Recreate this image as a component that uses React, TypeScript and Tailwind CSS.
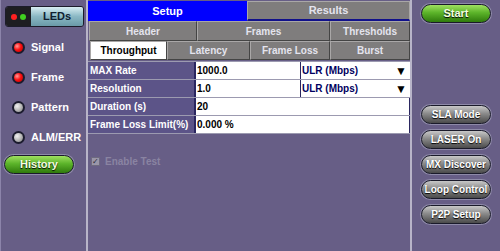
import React from 'react'

const font = { fontFamily: '"Liberation Sans", Arial, sans-serif' }

function Led({ on, label }: { on: boolean; label: string }) {
  return (
    <div className="flex items-center h-[30px] pl-[11px]">
      <div className="w-[13px] h-[13px] rounded-full bg-[#1b1b2e] flex items-center justify-center">
        <div
          className={`w-[9px] h-[9px] rounded-full ${
            on
              ? 'bg-[radial-gradient(circle_at_35%_35%,#ff9a9a,#ff1010_45%,#b00000)]'
              : 'bg-[radial-gradient(circle_at_35%_35%,#f2f2f2,#b8b8b8_50%,#7a7a7a)]'
          }`}
        />
      </div>
      <span className="ml-[6px] text-[11px] font-bold text-white">{label}</span>
    </div>
  )
}

function Pill({ label, green }: { label: string; green?: boolean }) {
  return (
    <div className="rounded-full p-[1px] bg-[#8e8aa8] w-[72px]">
      <div
        className={`h-[19px] rounded-full border border-[#1a1a2a] flex items-center justify-center whitespace-nowrap font-bold [text-shadow:0_1px_1px_#000] ${
          green
            ? 'text-[11px] bg-[linear-gradient(#9fe060,#5cb42a_45%,#2f7a0c)] text-[#f4ffe0]'
            : 'text-[10px] bg-[linear-gradient(#c8c8c8,#8a8a8a_45%,#4a4a4a)] text-white'
        }`}
      >
        {label}
      </div>
    </div>
  )
}

function Tab({ label, w, active }: { label: string; w: string; active?: boolean }) {
  return (
    <div
      className={`${w} h-full flex items-center justify-center text-[10px] font-bold border-t border-l border-t-[#a9a7a7] border-l-[#a9a7a7] border-b border-r border-b-[#444] border-r-[#444] ${
        active ? 'bg-white text-black' : 'bg-[#7f7d7d] text-[#e4e4ee]'
      }`}
    >
      {label}
    </div>
  )
}

function Row({ label, value, unit }: { label: string; value: string; unit?: string }) {
  return (
    <div className="flex h-[18px] border-b border-[#9c9ab0]">
      <div className="w-[108px] bg-[#5c5488] border-r-2 border-[#2a2660] flex items-center pl-[2px] text-[10px] font-bold text-white">
        {label}
      </div>
      <div
        className={`${unit ? 'w-[105px]' : 'flex-1'} bg-white border-r border-[#2a2660] flex items-center pl-[1px] text-[10px] font-bold text-black`}
      >
        {value}
      </div>
      {unit && (
        <div className="flex-1 bg-white flex items-center justify-between pl-[1px] pr-[3px] text-[10px] font-bold text-[#000060]">
          {unit}
          <span className="text-[12px] text-black leading-none">▼</span>
        </div>
      )}
    </div>
  )
}

export default function App() {
  return (
    <div className="w-[500px] h-[251px] bg-[#675e86] flex overflow-hidden" style={font}>
      {/* left */}
      <div className="w-[88px] h-full border-l border-[#8c84aa] border-r-2 border-r-[#b8b4c8] flex flex-col">
        <div className="mt-[6px] ml-[4px] w-[79px] h-[21px] flex rounded-[3px] border border-[#1c1c2a] overflow-hidden">
          <div className="w-[25px] bg-[#1e1e22] flex items-center justify-center gap-[3px]">
            <div className="w-[6px] h-[6px] rounded-full bg-[#ff2020]" />
            <div className="w-[6px] h-[6px] rounded-full bg-[#40d020]" />
          </div>
          <div className="flex-1 bg-[linear-gradient(#d8eef2,#8ab8c4_50%,#6a9aa8)] flex items-center justify-center text-[11px] font-bold text-[#102030]">
            LEDs
          </div>
        </div>
        <div className="mt-[5px]">
          <Led on label="Signal" />
          <Led on label="Frame" />
          <Led on={false} label="Pattern" />
          <Led on={false} label="ALM/ERR" />
        </div>
        <div className="mt-[2px] ml-[2px]">
          <Pill label="History" green />
        </div>
      </div>

      {/* main */}
      <div className="w-[324px] h-full flex flex-col border-r-2 border-[#b8b4c8]">
        <div className="flex h-[21px] pt-[1px]">
          <div className="w-[159px] bg-[#0000ff] flex items-center justify-center text-[11px] font-bold text-white">
            Setup
          </div>
          <div className="flex-1 bg-[#7f7d7d] border border-[#a9a7a7] border-b-2 border-b-[#10108a] flex items-center justify-center text-[11px] font-bold text-[#e4e4ee]">
            Results
          </div>
        </div>
        <div className="flex h-[20px] pl-[1px]">
          <Tab label="Header" w="w-[108px]" />
          <Tab label="Frames" w="w-[133px]" />
          <Tab label="Thresholds" w="flex-1" />
        </div>
        <div className="flex h-[19px] pl-[2px]">
          <Tab label="Throughput" w="w-[77px]" active />
          <Tab label="Latency" w="w-[83px]" />
          <Tab label="Frame Loss" w="w-[80px]" />
          <Tab label="Burst" w="flex-1" />
        </div>
        <div className="mt-[1px] border-t border-[#9c9ab0]">
          <Row label="MAX Rate" value="1000.0" unit="ULR (Mbps)" />
          <Row label="Resolution" value="1.0" unit="ULR (Mbps)" />
          <Row label="Duration (s)" value="20" />
          <Row label="Frame Loss Limit(%)" value="0.000 %" />
        </div>
        <div className="flex items-center mt-[20px] ml-[3px] gap-[5px]">
          <div className="w-[9px] h-[9px] bg-[#9a96a8] border border-[#6e6a80] flex items-center justify-center text-[8px] leading-none text-[#2a2a3a]">
            ✓
          </div>
          <span className="text-[10px] font-bold text-[#8a84a2]">Enable Test</span>
        </div>
      </div>

      {/* right */}
      <div className="flex-1 flex flex-col items-start pl-[8px] pt-[3px]">
        <Pill label="Start" green />
        <div className="mt-[80px] flex flex-col gap-[4px]">
          <Pill label="SLA Mode" />
          <Pill label="LASER On" />
          <Pill label="MX Discover" />
          <Pill label="Loop Control" />
          <Pill label="P2P Setup" />
        </div>
      </div>
    </div>
  )
}
